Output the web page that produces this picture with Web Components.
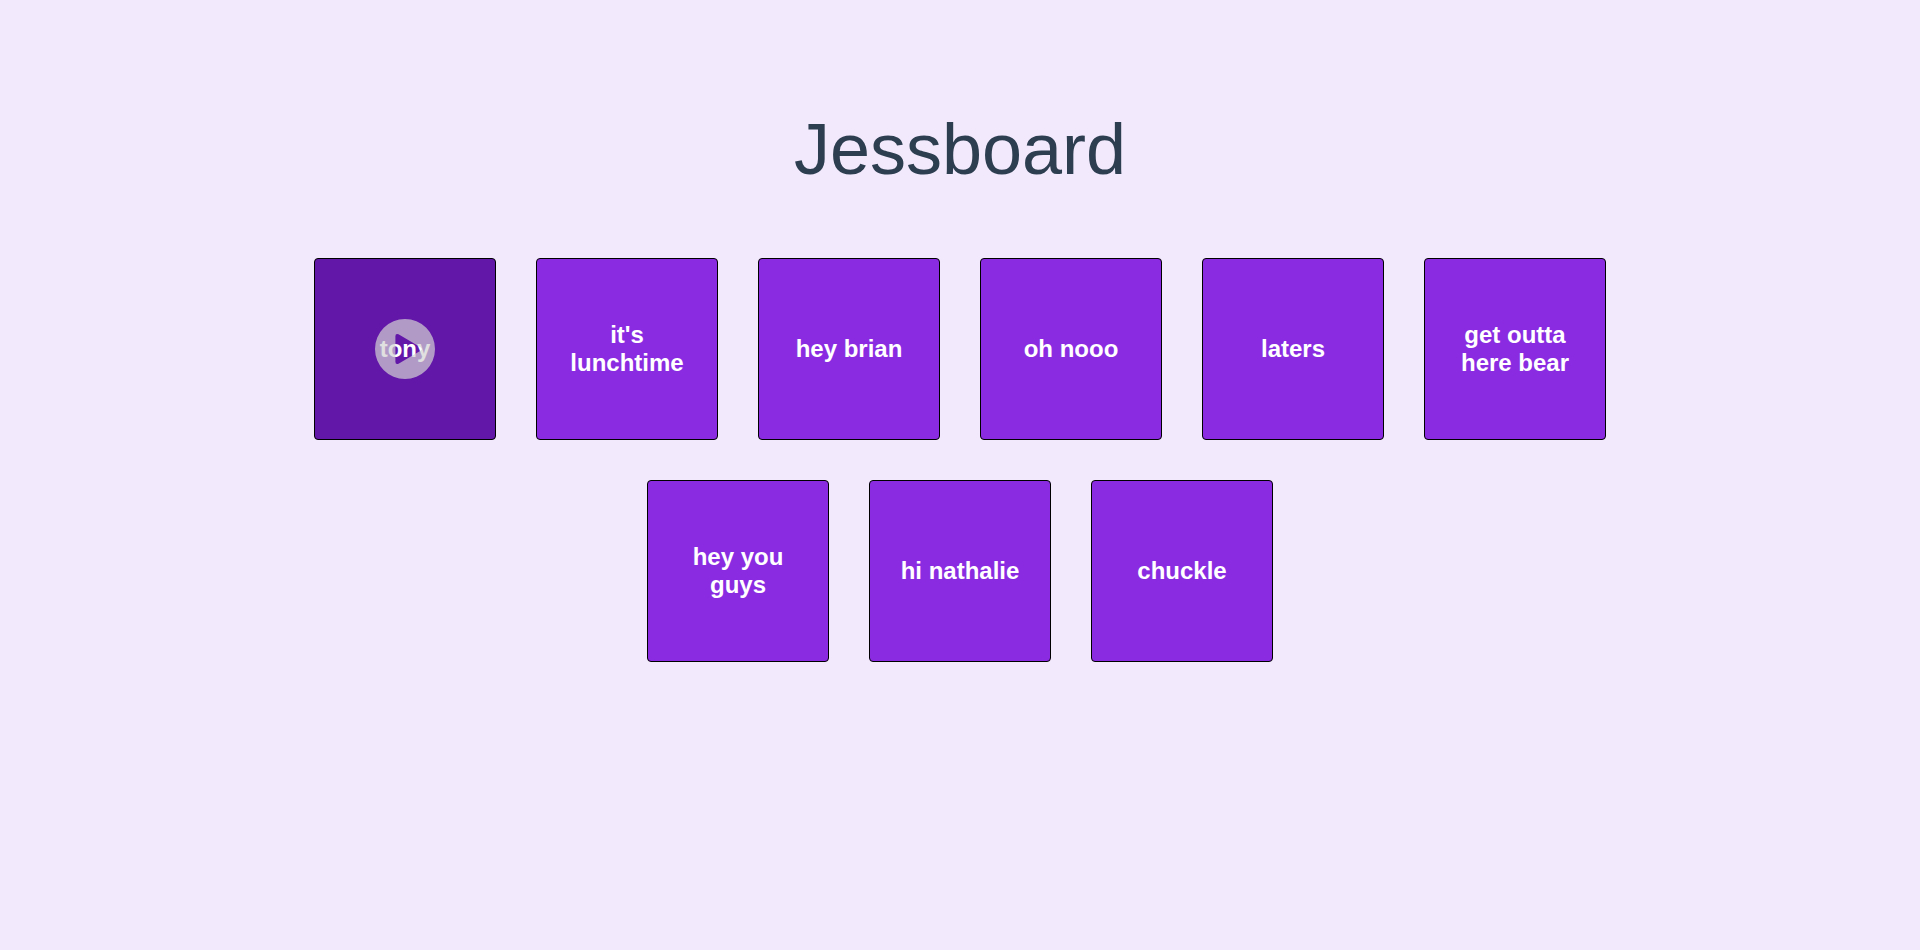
<!DOCTYPE html>
<html lang="en">
<head>
<meta charset="utf-8">
<title>Jessboard</title>
<style>
body { margin: 0; background: #f3e9fc; font-family: "Liberation Sans", Arial, sans-serif; color: #2c3e50; }
</style>
</head>
<body>
<jess-board>
<sound-tile active>tony</sound-tile>
<sound-tile>it's lunchtime</sound-tile>
<sound-tile>hey brian</sound-tile>
<sound-tile>oh nooo</sound-tile>
<sound-tile>laters</sound-tile>
<sound-tile>get outta here bear</sound-tile>
<sound-tile>hey you guys</sound-tile>
<sound-tile>hi nathalie</sound-tile>
<sound-tile>chuckle</sound-tile>
</jess-board>
<script>
class JessBoard extends HTMLElement {
  constructor() {
    super();
    this.attachShadow({ mode: "open" }).innerHTML = `
      <style>
        :host { display: block; padding-top: 107px; }
        h1 { margin: 0; font-size: 72px; line-height: 84px; font-weight: 400; text-align: center; }
        main { display: flex; flex-wrap: wrap; justify-content: center; gap: 40px; max-width: 1400px; margin: 67px auto 0; }
      </style>
      <h1>Jessboard</h1>
      <main><slot></slot></main>`;
  }
}
class SoundTile extends HTMLElement {
  constructor() {
    super();
    this.attachShadow({ mode: "open" }).innerHTML = `
      <style>
        :host { display: block; }
        button {
          position: relative; display: flex; align-items: center; justify-content: center;
          box-sizing: border-box; width: 182px; height: 182px; padding: 20px;
          border: 1px solid #000; border-radius: 4px; background: #8a2be2; color: #fff;
          font: bold 24px/28px "Liberation Sans", Arial, sans-serif; cursor: pointer;
        }
        svg { display: none; position: absolute; inset: 0; margin: auto; width: 60px; height: 60px; opacity: .7; }
        :host([active]) button { background: #6317a9; }
        :host([active]) svg { display: block; }
      </style>
      <button type="button"><slot></slot>
        <svg viewBox="0 0 60 60" aria-hidden="true"><path fill="#d3d3d3" fill-rule="evenodd" d="M30 0a30 30 0 1 0 0 60a30 30 0 1 0 0-60zM23.500 15.300L45.500 28.200Q48 30 45.500 31.800L23.500 44.700Q20.400 45.800 20.400 42.800V17.200Q20.400 14.200 23.500 15.300z"/></svg>
      </button>`;
  }
}
customElements.define("jess-board", JessBoard);
customElements.define("sound-tile", SoundTile);
</script>
</body>
</html>
